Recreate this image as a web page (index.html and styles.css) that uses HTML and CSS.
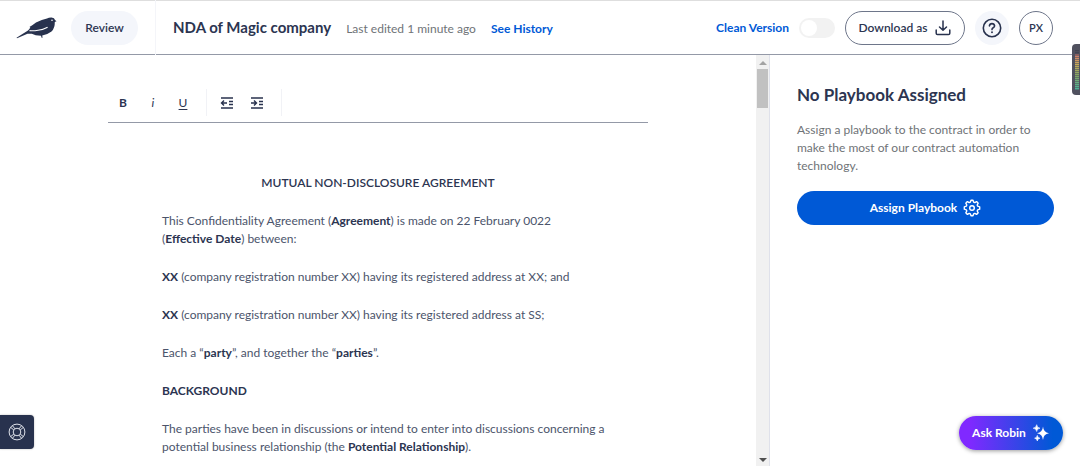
FILE: index.html
```html
<!DOCTYPE html>
<html lang="en">

<head>
    <meta charset="UTF-8">
    <meta name="viewport" content="width=device-width, initial-scale=1.0">
    <title>NDA of Magic company</title>
    <link rel="stylesheet" href="styles.css">
</head>

<body>

    <header class="header">
        <a class="logo" href="#" aria-label="Home">
            <svg width="42" height="22" viewBox="0 0 42 22">
                <path fill="#28324e" d="M0.5 20.7 L12 13.5 Q16 9.5 13 10.2 Q17 8 20 5.5 Q26 2.4 31 1.6 Q33 .4 35.5 .5 Q38.6 .8 39 3 L40.5 4.2 L38.8 5 Q39 11 35.5 14.6 Q31 18 26.2 18.6 L26.6 20.8 L25.6 20.8 L25 18.7 Q19 18.6 15.8 16.7 L11.5 16.8 L1 21.2 Z" />
                <path fill="none" stroke="#fff" stroke-width="1.1" d="M13.5 13.6 Q17 14.2 22 13.2 Q27 12.9 31.6 10.3" />
                <circle cx="36" cy="3.3" r=".8" fill="#fff" />
            </svg>
        </a>
        <button class="pill review">Review</button>
        <div class="header-main">
            <h1 class="doc-name">NDA of Magic company</h1>
            <span class="edited">Last edited 1 minute ago</span>
            <a class="history" href="#">See History</a>
        </div>
        <div class="header-actions">
            <label class="clean" for="clean">Clean Version</label>
            <input class="switch" type="checkbox" id="clean">
            <button class="pill download">
                Download as
                <svg width="16" height="16" viewBox="0 0 16 16" fill="none" stroke="#28324e" stroke-width="1.5" stroke-linecap="round" stroke-linejoin="round">
                    <path d="M8 1v9M4.5 7 8 10.3 11.5 7M1.2 10v3.2q0 1.3 1.3 1.3h11q1.3 0 1.3-1.3V10" />
                </svg>
            </button>
            <button class="round help" aria-label="Help">
                <svg width="20" height="20" viewBox="0 0 20 20" fill="none" stroke="#28324e" stroke-width="1.6" stroke-linecap="round">
                    <circle cx="10" cy="10" r="8.7" />
                    <path d="M7.4 7.9Q7.7 5.6 10 5.6T12.6 7.8Q12.6 9.1 11.2 9.8 10 10.4 10 11.6" />
                    <path d="M10 14.2v.1" stroke-width="1.9" />
                </svg>
            </button>
            <button class="round user">PX</button>
        </div>
    </header>

    <div class="content">
        <main class="editor">
            <div class="page">
                <div class="toolbar">
                    <div class="tools">
                        <button class="tool bold">B</button>
                        <button class="tool italic">i</button>
                        <button class="tool underline">U</button>
                    </div>
                    <div class="tools">
                        <button class="tool" aria-label="Outdent">
                            <svg width="14" height="12" viewBox="0 0 14 12" fill="none" stroke="#28324e" stroke-width="1.4">
                                <path d="M1 1h12M1 11h12M9 4.5h4M9 7.5h4M1.5 6H7M4 3.5 1.5 6 4 8.5" />
                            </svg>
                        </button>
                        <button class="tool" aria-label="Indent">
                            <svg width="14" height="12" viewBox="0 0 14 12" fill="none" stroke="#28324e" stroke-width="1.4">
                                <path d="M1 1h12M1 11h12M9 4.5h4M9 7.5h4M1 6h5.5M4 3.5 6.5 6 4 8.5" />
                            </svg>
                        </button>
                    </div>
                </div>
                <article class="document">
                    <h2 class="doc-title">MUTUAL NON-DISCLOSURE AGREEMENT</h2>
                    <p>This Confidentiality Agreement (<b>Agreement</b>) is made on 22 February 0022<br>(<b>Effective Date</b>) between:</p>
                    <p><b>XX</b> (company registration number XX) having its registered address at XX; and</p>
                    <p><b>XX</b> (company registration number XX) having its registered address at SS;</p>
                    <p>Each a “<b>party</b>”, and together the “<b>parties</b>”.</p>
                    <h3>BACKGROUND</h3>
                    <p>The parties have been in discussions or intend to enter into discussions concerning a potential business relationship (the <b>Potential Relationship</b>).</p>
                </article>
            </div>
        </main>

        <div class="scrollbar">
            <span class="arrow up"></span>
            <span class="thumb"></span>
            <span class="arrow down"></span>
        </div>

        <aside class="sidebar">
            <h2 class="side-title">No Playbook Assigned</h2>
            <p class="side-text">Assign a playbook to the contract in order to make the most of our contract automation technology.</p>
            <button class="pill assign">
                Assign Playbook
                <svg width="18" height="18" viewBox="0 0 18 18" fill="none" stroke="#fff" stroke-width="1.4" stroke-linejoin="round">
                    <path d="M7.4 3.1 8 1.2h2l.6 1.9 1.2.5 1.8-1 1.6 1.6-1 1.8.5 1.2 2 .6v2.4l-2 .6-.5 1.2 1 1.8-1.6 1.6-1.8-1-1.2.5-.6 1.9H8l-.6-1.9-1.2-.5-1.8 1-1.6-1.6 1-1.8-.5-1.2-2-.6V7.8l2-.6.5-1.2-1-1.8 1.6-1.6 1.8 1z" />
                    <circle cx="9" cy="9" r="2.3" />
                </svg>
            </button>
        </aside>
    </div>

    <div class="meter"><span class="meter-bars"></span></div>

    <button class="support" aria-label="Support">
        <svg width="18" height="18" viewBox="0 0 18 18" fill="none" stroke="#dfe2ea" stroke-width="1">
            <circle cx="9" cy="9" r="7.9" />
            <circle cx="9" cy="9" r="3.8" />
            <path d="M2.7 4.4 5.8 7M4.4 2.7 7 5.8M13.6 2.7 11 5.8M15.3 4.4 12.2 7M2.7 13.6 5.8 11M4.4 15.3 7 12.2M15.3 13.6 12.2 11M13.6 15.3 11 12.2" />
        </svg>
    </button>

    <button class="pill ask">
        Ask Robin
        <svg width="18" height="18" viewBox="0 0 18 18" fill="#fff">
            <path d="M11 2.5Q11.5 8.5 17 9.3 11.5 10 11 16 10.4 10 5 9.3 10.5 8.5 11 2.5Z" />
            <path stroke="#fff" stroke-width=".6" d="M4.7.7Q4.9 3.7 8 4.2 4.9 4.6 4.7 7.5 4.4 4.6 1.2 4.2 4.4 3.7 4.7.7ZM5.3 11.4Q5.5 13.8 8 14.2 5.5 14.5 5.3 17 5 14.5 2.6 14.2 5 13.8 5.3 11.4Z" />
        </svg>
    </button>

</body>

</html>
```
FILE: styles.css
```css
* {
    margin: 0;
    padding: 0;
    box-sizing: border-box;
}

body {
    display: flex;
    flex-direction: column;
    height: 100vh;
    overflow: hidden;
    background: #fff;
    color: #2c3551;
    font-family: Lato, "Liberation Sans", sans-serif;
    font-size: 12px;
    line-height: 18px;
}

button {
    border: none;
    background: none;
    color: inherit;
    font: inherit;
    cursor: pointer;
}

a {
    text-decoration: none;
}

svg {
    display: block;
    flex-shrink: 0;
}

/* header */
.header {
    display: flex;
    align-items: center;
    flex-shrink: 0;
    height: 55px;
    padding: 0 27px 0 16px;
    border-top: 1px solid #dedede;
    border-bottom: 1px solid #9499a7;
}

.pill {
    display: flex;
    align-items: center;
    justify-content: center;
    height: 34px;
    border-radius: 17px;
    font-weight: 600;
}

.review {
    width: 67px;
    margin: 0 17px 0 13px;
    background: #f4f6fb;
}

.header-main {
    display: flex;
    align-items: baseline;
    flex: 1;
    gap: 15px;
    padding: 17px;
    border-left: 1px solid #f4f5f9;
}

.doc-name {
    font-size: 15px;
    font-weight: 700;
    line-height: 20px;
}

.edited {
    color: #6f7377;
}

.history,
.clean {
    color: #0059d6;
    font-weight: 700;
}

.header-actions {
    display: flex;
    align-items: center;
    gap: 10px;
}

.switch {
    appearance: none;
    width: 36px;
    height: 20px;
    padding: 2px;
    border-radius: 10px;
    background: #f2f2f2;
}

.switch::before {
    content: "";
    display: block;
    width: 16px;
    height: 16px;
    border-radius: 50%;
    background: #fff;
}

.switch:checked {
    background: #0059d6;
}

.download {
    gap: 8px;
    width: 120px;
    border: 1px solid #6e768a;
}

.round {
    display: flex;
    align-items: center;
    justify-content: center;
    width: 34px;
    height: 34px;
    border-radius: 50%;
}

.help {
    background: #f4f6fb;
}

.user {
    border: 1px solid #6e768a;
    font-size: 11px;
    font-weight: 600;
}

/* editor */
.content {
    display: flex;
    flex: 1;
    min-height: 0;
}

.editor {
    flex: 1;
    overflow: hidden;
}

.page {
    max-width: 540px;
    margin: 0 auto;
}

.toolbar {
    display: flex;
    height: 68px;
    padding-top: 34px;
    border-bottom: 1px solid #9499a7;
}

.tools {
    display: flex;
    align-items: center;
    height: 27px;
    padding-right: 8px;
    border-right: 1px solid #f1f2f6;
}

.tools + .tools {
    padding: 0 9px 0 5px;
}

.tool {
    display: flex;
    align-items: center;
    justify-content: center;
    width: 30px;
    height: 26px;
}

.bold {
    font-weight: 700;
}

.italic {
    font-style: italic;
}

.underline {
    text-decoration: underline;
    text-underline-offset: 2px;
}

.document {
    display: flex;
    flex-direction: column;
    gap: 20px;
    padding: 51px 40px 51px 54px;
    color: #4b546b;
}

.document b,
.document h2,
.document h3 {
    color: #2c3551;
    font-size: 12px;
    font-weight: 700;
}

.document .doc-title {
    padding-right: 14px;
    font-weight: 600;
    text-align: center;
}

/* scrollbar */
.scrollbar {
    display: flex;
    flex-direction: column;
    align-items: center;
    width: 13px;
    padding: 6px 0 4px;
    background: #f1f1f1;
}

.arrow {
    border: 4px solid transparent;
}

.up {
    border-top: none;
    border-bottom-color: #a3a3a3;
}

.down {
    margin-top: auto;
    border-bottom: none;
    border-top-color: #505050;
}

.thumb {
    width: 11px;
    height: 39px;
    margin-top: 4px;
    background: #c1c1c1;
}

/* sidebar */
.sidebar {
    width: 311px;
    padding: 28px 26px 0 27px;
    border-left: 1px solid #dfe1ea;
}

.side-title {
    font-size: 17px;
    font-weight: 700;
    line-height: 24px;
}

.side-text {
    margin: 14px 0 16px;
    color: #6f7377;
}

.assign {
    gap: 6px;
    width: 100%;
    background: #0059d6;
    color: #fff;
    font-weight: 700;
}

/* floating items */
.meter {
    position: absolute;
    top: 44px;
    right: 0;
    width: 8px;
    height: 51px;
    padding: 6px 1px 5px 3px;
    border-radius: 4px 0 0 4px;
    background: #50515f;
}

.meter-bars {
    display: block;
    height: 40px;
    background: repeating-linear-gradient(rgba(80, 81, 95, 0) 0 1px, rgba(80, 81, 95, 0.6) 1px 2px), linear-gradient(#424350 0 4px, #d0786c 5px, #c9ab58 14px, #86a563 25px, #45b69a);
}

.support {
    position: absolute;
    left: 0;
    bottom: 17px;
    width: 34px;
    height: 34px;
    padding-left: 8px;
    border-radius: 0 4px 4px 0;
    background: #28324e;
    box-shadow: 0 0 2px rgba(0, 0, 0, 0.3);
}

.ask {
    position: absolute;
    right: 17px;
    bottom: 16px;
    gap: 6px;
    width: 104px;
    background: linear-gradient(90deg, #8029ff 10%, #0059d6 90%);
    box-shadow: 0 1px 4px rgba(0, 0, 0, 0.4);
    color: #fff;
    font-weight: 700;
}
```
